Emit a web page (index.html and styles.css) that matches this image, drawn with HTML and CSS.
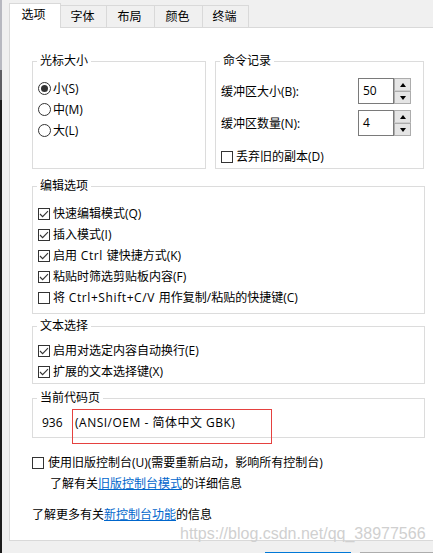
FILE: index.html
```html
<!DOCTYPE html>
<html lang="zh-CN">
<head>
<meta charset="utf-8">
<title>属性</title>
<link rel="stylesheet" href="styles.css">
</head>
<body>
<div class="edge"></div>
<div class="dialog">
  <div class="tabs">
    <div class="tab active">选项</div>
    <div class="tab w46">字体</div>
    <div class="tab w48">布局</div>
    <div class="tab w48">颜色</div>
    <div class="tab w46">终端</div>
  </div>
  <div class="panel">
    <div class="row-top">
      <fieldset class="group g-cursor">
        <legend>光标大小</legend>
        <div class="gbody cursor-body">
          <div class="opt"><span class="radio checked"></span>小(S)</div>
          <div class="opt"><span class="radio"></span>中(M)</div>
          <div class="opt"><span class="radio"></span>大(L)</div>
        </div>
      </fieldset>
      <fieldset class="group g-history">
        <legend>命令记录</legend>
        <div class="gbody history-body">
          <div class="spin-row">
            <span>缓冲区大小(B):</span>
            <div class="spin">
              <div class="spin-field">50</div>
              <div class="spin-btns"><span class="spin-btn up"></span><span class="spin-btn down"></span></div>
            </div>
          </div>
          <div class="spin-row second">
            <span>缓冲区数量(N):</span>
            <div class="spin">
              <div class="spin-field">4</div>
              <div class="spin-btns"><span class="spin-btn up"></span><span class="spin-btn down"></span></div>
            </div>
          </div>
          <div class="opt discard"><svg class="cb" viewBox="0 0 12 12" width="12" height="12"><rect x="0.5" y="0.5" width="11" height="11" fill="#fff" stroke="#333"/></svg>丢弃旧的副本(D)</div>
        </div>
      </fieldset>
    </div>

    <fieldset class="group wide g-edit">
      <legend>编辑选项</legend>
      <div class="gbody edit-body">
        <div class="opt"><svg class="cb" viewBox="0 0 12 12" width="12" height="12"><rect x="0.5" y="0.5" width="11" height="11" fill="#fff" stroke="#333"/><path d="M2 6 L4.6 8.6 L10 3.2" fill="none" stroke="#333" stroke-width="1.1"/></svg>快速编辑模式(Q)</div>
        <div class="opt"><svg class="cb" viewBox="0 0 12 12" width="12" height="12"><rect x="0.5" y="0.5" width="11" height="11" fill="#fff" stroke="#333"/><path d="M2 6 L4.6 8.6 L10 3.2" fill="none" stroke="#333" stroke-width="1.1"/></svg>插入模式(I)</div>
        <div class="opt"><svg class="cb" viewBox="0 0 12 12" width="12" height="12"><rect x="0.5" y="0.5" width="11" height="11" fill="#fff" stroke="#333"/><path d="M2 6 L4.6 8.6 L10 3.2" fill="none" stroke="#333" stroke-width="1.1"/></svg>启用<span class="lat">&nbsp;Ctrl&nbsp;</span>键快捷方式(K)</div>
        <div class="opt"><svg class="cb" viewBox="0 0 12 12" width="12" height="12"><rect x="0.5" y="0.5" width="11" height="11" fill="#fff" stroke="#333"/><path d="M2 6 L4.6 8.6 L10 3.2" fill="none" stroke="#333" stroke-width="1.1"/></svg>粘贴时筛选剪贴板内容(F)</div>
        <div class="opt"><svg class="cb" viewBox="0 0 12 12" width="12" height="12"><rect x="0.5" y="0.5" width="11" height="11" fill="#fff" stroke="#333"/></svg>将<span class="lat">&nbsp;Ctrl+Shift+C/V&nbsp;</span>用作复制/粘贴的快捷键(C)</div>
      </div>
    </fieldset>

    <fieldset class="group wide g-select">
      <legend>文本选择</legend>
      <div class="gbody select-body">
        <div class="opt"><svg class="cb" viewBox="0 0 12 12" width="12" height="12"><rect x="0.5" y="0.5" width="11" height="11" fill="#fff" stroke="#333"/><path d="M2 6 L4.6 8.6 L10 3.2" fill="none" stroke="#333" stroke-width="1.1"/></svg>启用对选定内容自动换行(E)</div>
        <div class="opt"><svg class="cb" viewBox="0 0 12 12" width="12" height="12"><rect x="0.5" y="0.5" width="11" height="11" fill="#fff" stroke="#333"/><path d="M2 6 L4.6 8.6 L10 3.2" fill="none" stroke="#333" stroke-width="1.1"/></svg>扩展的文本选择键(X)</div>
      </div>
    </fieldset>

    <fieldset class="group wide g-codepage">
      <legend>当前代码页</legend>
      <div class="gbody codepage-body">
        <span class="cp-num">936</span><span class="cp-name">(ANSI/OEM - 简体中文 GBK)</span>
      </div>
    </fieldset>

    <div class="opt legacy"><svg class="cb" viewBox="0 0 12 12" width="12" height="12"><rect x="0.5" y="0.5" width="11" height="11" fill="#fff" stroke="#333"/></svg>使用旧版控制台(U)(需要重新启动，影响所有控制台)</div>
    <div class="info info-legacy">了解有关<a class="link" href="#">旧版控制台模式</a>的详细信息</div>
    <div class="info info-new">了解更多有关<a class="link" href="#">新控制台功能</a>的信息</div>
  </div>
  <div class="buttons">
    <span class="btn default"></span>
    <span class="btn"></span>
  </div>
</div>
<div class="watermark">https://blog.csdn.net/qq_38977566</div>
</body>
</html>
```
FILE: styles.css
```css
* { box-sizing: border-box; }
html, body { margin: 0; padding: 0; }
body {
  width: 433px;
  height: 553px;
  overflow: hidden;
  position: relative;
  display: flex;
  background: #f0f0f0;
  font-family: "Open Sans", "Noto Sans CJK SC", sans-serif;
  font-size: 12px;
  color: #000;
}
.edge {
  flex: none;
  width: 2px;
  background: linear-gradient(to bottom, #b7b8c0 0, #b7b8c0 70px, #5e5e63 70px, #5e5e63 100px, #1c1c1c 100px);
}
.dialog {
  flex: none;
  width: 431px;
  padding: 3px 0 0 7px;
}
.tabs {
  display: flex;
  align-items: flex-start;
  height: 24px;
}
.tab {
  flex: none;
  height: 22px;
  margin-top: 2px;
  padding-right: 2px;
  border-top: 1px solid #d9d9d9;
  border-right: 1px solid #d9d9d9;
  background: #f0f0f0;
  text-align: center;
  line-height: 21px;
}
.tab.w46 { width: 46px; }
.tab.w48 { width: 48px; }
.tab.active {
  position: relative;
  z-index: 1;
  width: 52px;
  height: 25px;
  margin-top: 0;
  padding: 0 3px 2px 0;
  border-left: 1px solid #d9d9d9;
  background: #fff;
  line-height: 22px;
}
.panel {
  width: 440px;
  height: 514px;
  background: #fff;
  border: 1px solid #d9d9d9;
  padding: 25px 0 0 22px;
}
.row-top {
  display: flex;
  gap: 9px;
  align-items: stretch;
}
.group {
  margin: 0;
  padding: 0;
  min-width: 0;
  border: 1px solid #dcdcdc;
}
.group legend {
  margin-left: 4px;
  padding: 0 3px;
  line-height: 16px;
}
.g-cursor { width: 174px; }
.g-history { width: 209px; }
.wide { width: 393px; }
.g-edit { margin-top: 9px; }
.g-select { margin-top: 4px; }
.g-codepage { margin-top: 6px; }

.cursor-body { padding: 9px 0 0 5px; }
.history-body { padding: 9px 12px 1px 5px; }
.edit-body { padding: 9px 0 5px 5px; }
.select-body { padding: 6px 0 1px 5px; }
.codepage-body { padding: 7px 0 4px 9px; line-height: 20px; height: 20px; box-sizing: content-box; display: flex; }

.opt {
  display: flex;
  align-items: center;
  height: 21px;
  line-height: 21px;
  white-space: nowrap;
}
.lat { letter-spacing: 0.6px; }
.radio {
  flex: none;
  width: 13px;
  height: 13px;
  margin-right: 2px;
  border: 1px solid #333;
  border-radius: 50%;
  background: #fff;
  display: flex;
  align-items: center;
  justify-content: center;
}
.radio.checked::after {
  content: "";
  width: 7px;
  height: 7px;
  border-radius: 50%;
  background: #333;
}
.cb {
  flex: none;
  display: block;
  margin-right: 3px;
}
.spin-row {
  display: flex;
  align-items: center;
  justify-content: space-between;
  height: 26px;
}
.spin-row.second { margin-top: 6px; }
.discard { margin-top: 10px; }
.spin { display: flex; }
.spin-field {
  width: 36px;
  height: 26px;
  border: 1px solid #7a7a7a;
  padding-left: 4px;
  line-height: 24px;
  background: #fff;
}
.spin-btns {
  display: flex;
  flex-direction: column;
  width: 17px;
}
.spin-btn {
  height: 13px;
  border: 1px solid #acacac;
  background: #e5e5e5;
  display: flex;
  align-items: center;
  justify-content: center;
}
.spin-btn.up { border-bottom-color: #cfcfcf; }
.spin-btn.up::after {
  content: "";
  border-left: 3.5px solid transparent;
  border-right: 3.5px solid transparent;
  border-bottom: 4px solid #000;
}
.spin-btn.down::after {
  content: "";
  border-left: 3.5px solid transparent;
  border-right: 3.5px solid transparent;
  border-top: 4px solid #000;
}
.cp-num { width: 33px; flex: none; }
.cp-name {
  position: relative;
  white-space: nowrap;
  letter-spacing: 0.5px;
}
.cp-name::after {
  content: "";
  position: absolute;
  left: -3px;
  top: -4px;
  width: 198px;
  height: 33px;
  border: 1px solid #e5413f;
}
.legacy { margin-top: 14px; }
.legacy .cb { margin-right: 4px; }
.info { line-height: 21px; height: 21px; white-space: nowrap; }
.info-legacy { padding-left: 18px; }
.info-new { margin-top: 10px; }
.link { color: #0066cc; text-decoration: underline; }
.buttons {
  display: flex;
  gap: 9px;
  margin: 11px 0 0 256px;
}
.btn {
  flex: none;
  width: 86px;
  height: 23px;
  border: 1px solid #adadad;
  background: #e1e1e1;
}
.btn.default {
  border: 2px solid #0078d7;
}
.watermark {
  position: absolute;
  left: 180px;
  top: 526px;
  font-family: "Liberation Sans", Arial, sans-serif;
  font-size: 16px;
  line-height: 16px;
  color: #d0d0d0;
  white-space: nowrap;
}
```
